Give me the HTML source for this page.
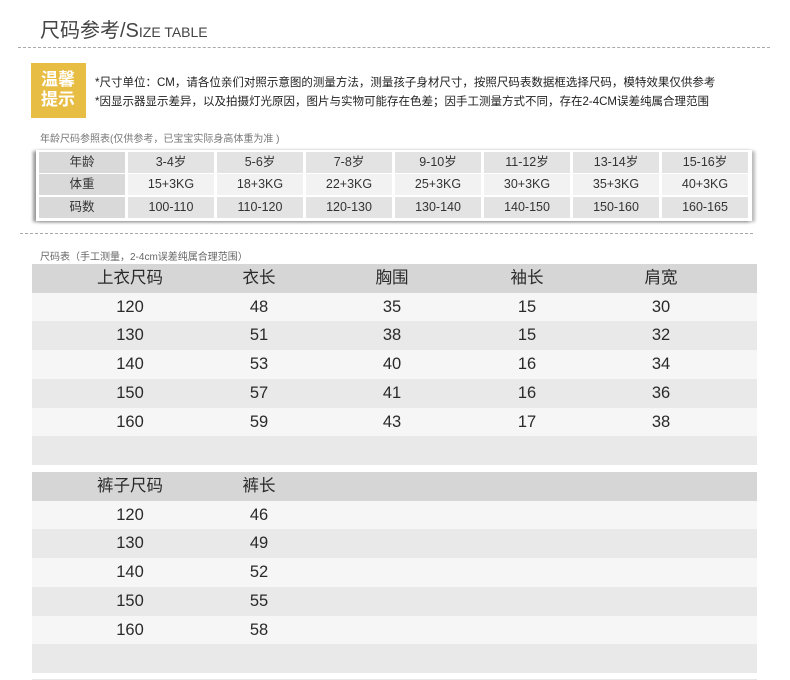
<!DOCTYPE html>
<html><head><meta charset="utf-8"><style>
*{margin:0;padding:0;box-sizing:border-box}
body{width:790px;height:680px;background:#fff;position:relative;overflow:hidden;font-family:"Liberation Sans","Noto Sans CJK SC",sans-serif;color:#333}
.a{position:absolute}
.dash{position:absolute;border-top:1px dashed #aaa;height:0}
.t1{position:absolute;left:36px;top:150px;width:716px;height:71px;background:#fff;box-shadow:-3px 1px 3px #999, 3px 1px 3px #bbb}
.c{position:absolute;height:21px;width:86px;font-size:12.5px;line-height:21px;text-align:center;color:#333}
.r{position:absolute;left:32px;width:725px;height:29px}
.r span{position:absolute;top:0;line-height:29px;font-size:16.5px;color:#2a2a2a;width:120px;text-align:center}
</style></head><body>
<div class="a" style="left:40px;top:14px;font-size:20px;color:#444;">尺码参考/S<span style="font-size:14px">IZE TABLE</span></div>
<div class="dash" style="left:18px;top:47px;width:752px"></div>
<div class="a" style="left:31px;top:63px;width:55px;height:55px;background:#e8bd44;color:#fff;font-size:17px;font-weight:bold;line-height:20px;padding:7px 0 0 10px;letter-spacing:0">温馨<br>提示</div>
<div class="a" style="left:95px;top:74px;font-size:11.5px;color:#222">*尺寸单位：CM，请各位亲们对照示意图的测量方法，测量孩子身材尺寸，按照尺码表数据框选择尺码，模特效果仅供参考</div>
<div class="a" style="left:95px;top:93px;font-size:11.5px;color:#222">*因显示器显示差异，以及拍摄灯光原因，图片与实物可能存在色差；因手工测量方式不同，存在2-4CM误差纯属合理范围</div>
<div class="a" style="left:40px;top:130px;font-size:10px;color:#777">年龄尺码参照表(仅供参考，已宝宝实际身高体重为准 )</div>
<div class="t1"></div>
<div id="t1"></div>
<div class="dash" style="left:20px;top:233px;width:733px"></div>
<div class="a" style="left:40px;top:248px;font-size:10px;color:#666">尺码表（手工测量，2-4cm误差纯属合理范围）</div>
<div id="t2"></div>
<div class="a" style="left:32px;top:679px;width:725px;height:1px;background:#e6e6e6"></div>
<script>
var rows=[["年龄","3-4岁","5-6岁","7-8岁","9-10岁","11-12岁","13-14岁","15-16岁"],["体重","15+3KG","18+3KG","22+3KG","25+3KG","30+3KG","35+3KG","40+3KG"],["码数","100-110","110-120","120-130","130-140","140-150","150-160","160-165"]];
var ys=[152,174,197],h="";
rows.forEach(function(r,i){r.forEach(function(t,j){var bg=j==0?"#d9d9d9":(i==1?"#f2f2f2":"#e3e3e3");h+='<div class="c" style="left:'+(39+j*89)+'px;top:'+ys[i]+'px;background:'+bg+'">'+t+'</div>';});});
document.getElementById("t1").innerHTML=h;
function tbl(top,data,cx){var s="";data.forEach(function(r,i){var bg=i==0?"#d6d6d6":(i%2==1?"#f6f6f6":"#e9e9e9");s+='<div class="r" style="top:'+(top+i*28.7)+'px;background:'+bg+'">';r.forEach(function(t,j){s+='<span style="left:'+(cx[j]-32-60)+'px">'+t+'</span>';});s+='</div>';});return s;}
var a=[["上衣尺码","衣长","胸围","袖长","肩宽"],["120","48","35","15","30"],["130","51","38","15","32"],["140","53","40","16","34"],["150","57","41","16","36"],["160","59","43","17","38"],[]];
var b=[["裤子尺码","裤长"],["120","46"],["130","49"],["140","52"],["150","55"],["160","58"],[]];
var cx=[130,259,392,527,661];
document.getElementById("t2").innerHTML=tbl(264,a,cx)+tbl(472,b,cx);
</script>
</body></html>
